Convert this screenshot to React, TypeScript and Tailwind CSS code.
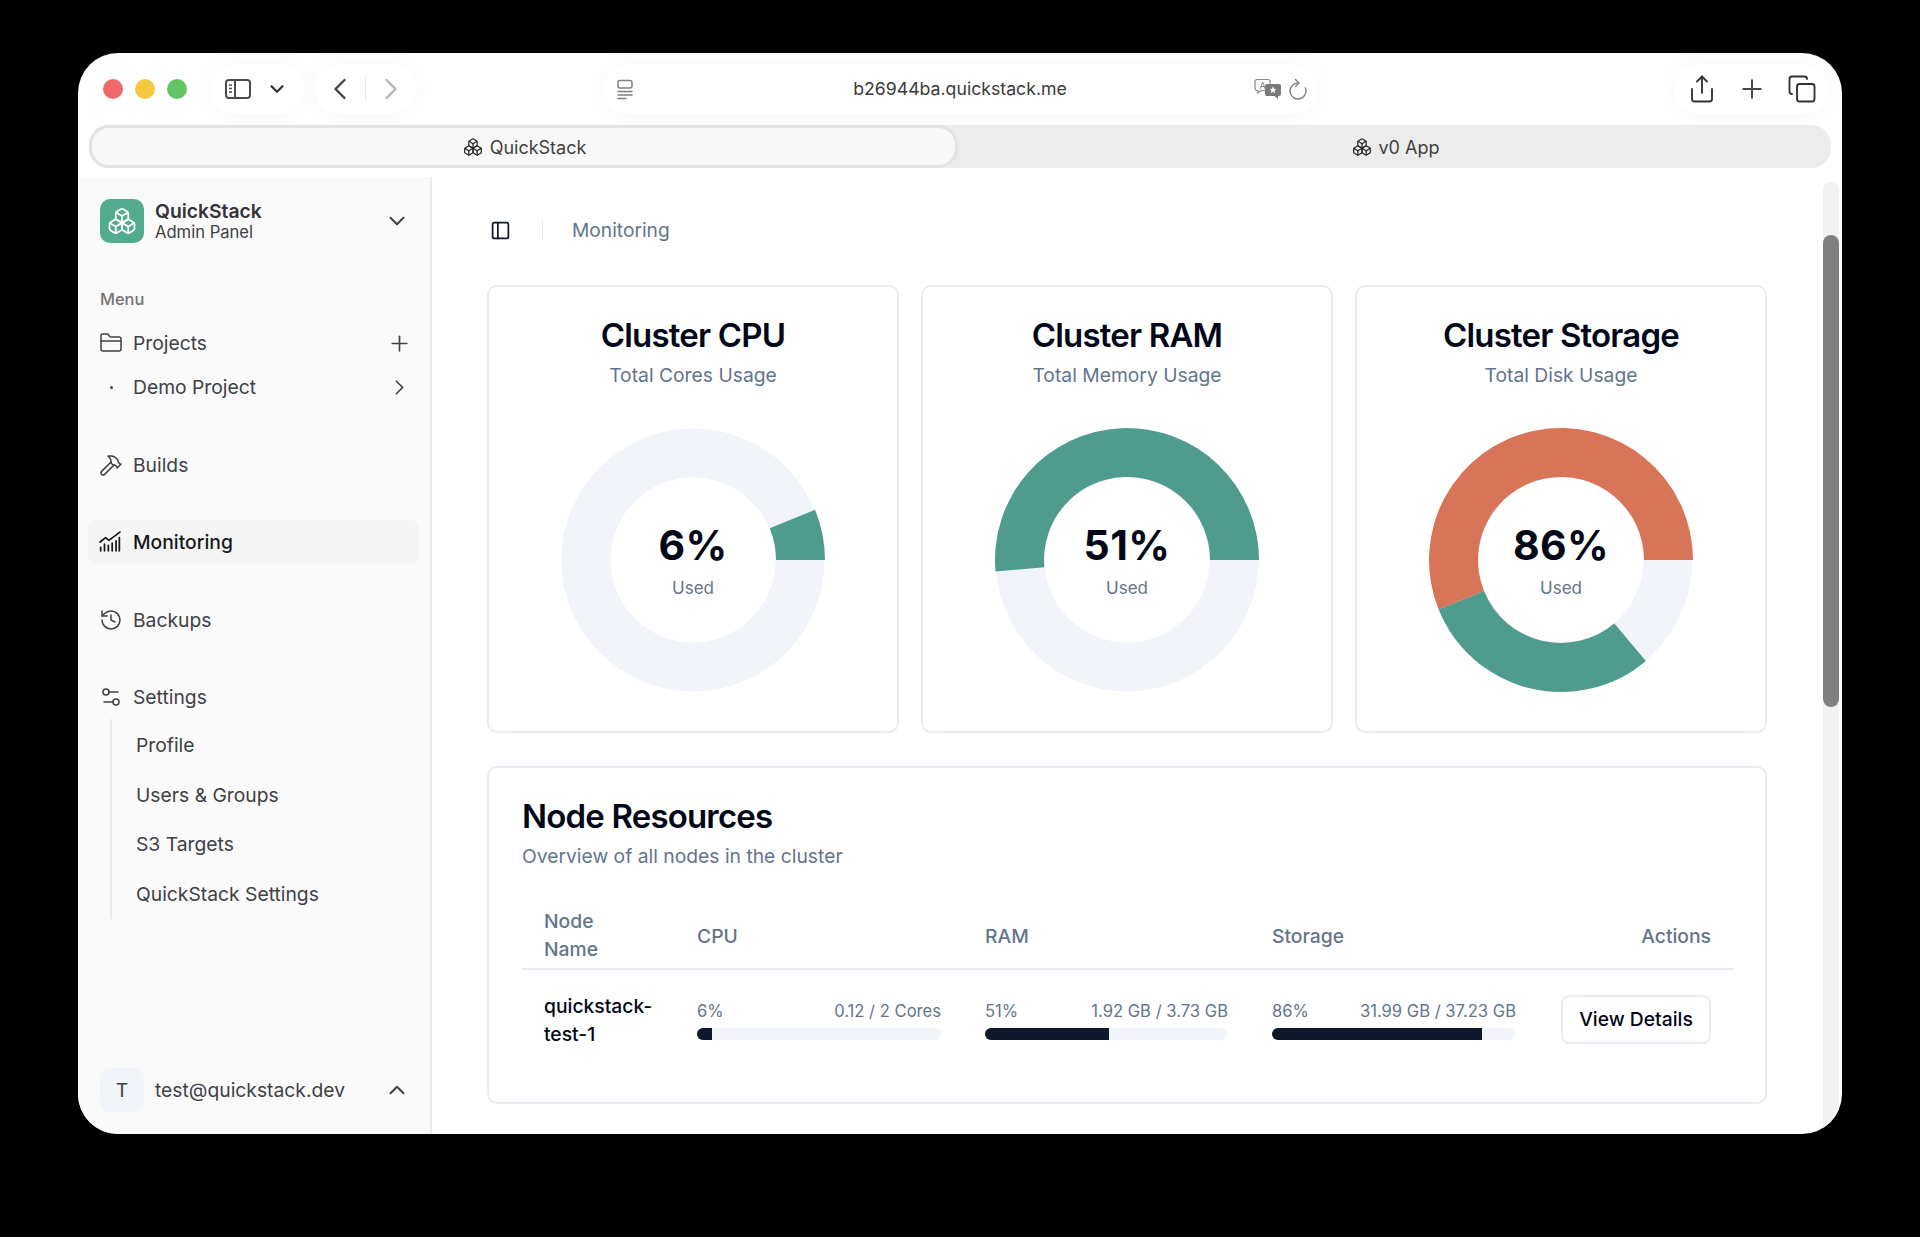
import { Boxes, ChevronDown, ChevronLeft, ChevronRight, ChevronUp, Copy, FolderClosed, Hammer, History, PanelLeft, Plus, Settings2, Share } from "lucide-react"

const font = "font-['Inter',sans-serif]"
const teal = "#4f9b8e"
const orange = "#d87558"

// donut wedge, angles are counter-clockwise from 3 o'clock
function wedge(cx: number, cy: number, r1: number, r2: number, from: number, to: number) {
  const rad = (a: number) => (a * Math.PI) / 180
  const pt = (r: number, a: number) => `${(cx + r * Math.cos(rad(a))).toFixed(2)} ${(cy - r * Math.sin(rad(a))).toFixed(2)}`
  const large = to - from > 180 ? 1 : 0
  return `M${pt(r2, from)}A${r2} ${r2} 0 ${large} 0 ${pt(r2, to)}L${pt(r1, to)}A${r1} ${r1} 0 ${large} 1 ${pt(r1, from)}Z`
}

const clusters = [
  { title: "Cluster CPU", sub: "Total Cores Usage", pct: "6%", segs: [{ from: 0, to: 22.4, color: teal }] },
  { title: "Cluster RAM", sub: "Total Memory Usage", pct: "51%", segs: [{ from: 0, to: 185, color: teal }] },
  {
    title: "Cluster Storage",
    sub: "Total Disk Usage",
    pct: "86%",
    segs: [
      { from: 0, to: 202, color: orange },
      { from: 202, to: 310, color: teal },
    ],
  },
]

const usage = [
  { pct: 6, label: "6%", detail: "0.12 / 2 Cores" },
  { pct: 51, label: "51%", detail: "1.92 GB / 3.73 GB" },
  { pct: 86, label: "86%", detail: "31.99 GB / 37.23 GB" },
]

function Donut({ pct, segs }: { pct: string; segs: { from: number; to: number; color: string }[] }) {
  return (
    <div className="relative mt-[41px] h-[264px] w-[264px]">
      <svg viewBox="0 0 264 264" className="h-full w-full">
        <circle cx="132" cy="132" r="107" fill="none" stroke="#f1f5f9" strokeWidth="49" />
        {segs.map((s) => (
          <path key={s.from} d={wedge(132, 132, 83, 132, s.from, s.to)} fill={s.color} />
        ))}
      </svg>
      <div className="absolute inset-0 flex flex-col items-center justify-center">
        <div className="mt-[-1px] text-[41px] leading-[50px] font-bold tracking-[0.01em] text-[#020817]">{pct}</div>
        <div className="mt-[6px] text-[17px] leading-[24px] text-[#64748b]">Used</div>
      </div>
    </div>
  )
}

function NavItem({ icon, label, active, right }: { icon: React.ReactNode; label: string; active?: boolean; right?: React.ReactNode }) {
  return (
    <div className={`flex h-[44px] items-center rounded-lg pr-[7px] pl-[11px] text-[19.3px] ${active ? "bg-[#f5f5f5] font-medium text-[#18181b]" : "text-[#3f3f46]"}`}>
      <span className="flex w-[34px] shrink-0 items-center">{icon}</span>
      <span className="flex-1">{label}</span>
      {right}
    </div>
  )
}

function TrendIcon() {
  return (
    <svg width="22" height="22" viewBox="0 0 20 20" fill="none" stroke="#18181b" strokeWidth="1.6" strokeLinecap="round" strokeLinejoin="round">
      <path d="M1 10l5-4 3 2.500L19 1" />
      <path d="M1.500 18v-3M5 18v-6M8.500 18v-5M12 18v-7M15.500 18v-9M18.500 18V6" />
    </svg>
  )
}

function TranslateIcon() {
  return (
    <svg width="28" height="22" viewBox="0 0 28 22" fill="none">
      <path d="M3 1.500h11a2 2 0 0 1 2 2v7a2 2 0 0 1-2 2H7l-3 2.500v-2.500H3a2 2 0 0 1-2-2v-7a2 2 0 0 1 2-2z" fill="#fff" stroke="#8a8a8a" strokeWidth="1.200" />
      <text x="8.500" y="10.500" textAnchor="middle" fontSize="9" fill="#777" fontFamily="Inter, sans-serif">A</text>
      <path d="M13 6h12a2 2 0 0 1 2 2v8a2 2 0 0 1-2 2h-1v3l-3.500-3H13a2 2 0 0 1-2-2V8a2 2 0 0 1 2-2z" fill="#7a7a7a" />
      <path d="M19 8.500l1 2.300 2.400.2-1.800 1.600.6 2.400-2.200-1.300-2.200 1.300.6-2.400-1.800-1.600 2.400-.2z" fill="#fff" />
    </svg>
  )
}

function ReloadIcon() {
  return (
    <svg width="20" height="22" viewBox="0 0 20 22" fill="none" stroke="#808080" strokeWidth="1.400" strokeLinecap="round" strokeLinejoin="round">
      <path d="M17.400 10a8 8 0 1 1-7.400-5" />
      <path d="M7.500 1.500L11 5 7.500 8.500" />
    </svg>
  )
}

function SidebarGlyph() {
  return (
    <svg width="28" height="24" viewBox="0 0 28 24" fill="none" stroke="#4b4b4b" strokeWidth="2">
      <rect x="2" y="3" width="24" height="18" rx="3" />
      <path d="M11 3v18" />
      <path d="M5 8h3M5 11.500h3M5 15h3" strokeWidth="1.300" />
    </svg>
  )
}

function TabsGlyph() {
  return (
    <svg width="22" height="22" viewBox="0 0 22 22" fill="none" stroke="#808080" strokeWidth="1.500" strokeLinecap="round">
      <rect x="4" y="2.500" width="14" height="7.500" rx="2" />
      <path d="M4 13.500h14M4 17h14M4 20.500h8" />
    </svg>
  )
}

export default function App() {
  return (
    <div className={`min-h-screen bg-black pt-[53px] pl-[78px] ${font}`}>
      <div className="flex h-[1081px] w-[1764px] flex-col overflow-hidden rounded-[40px] bg-white">
        {/* Safari toolbar */}
        <div className="flex h-[72px] shrink-0 items-center pr-[14px] pl-[25px]">
          <div className="flex gap-[12px]">
            <span className="h-[20px] w-[20px] rounded-full bg-[#ee6a6a]" />
            <span className="h-[20px] w-[20px] rounded-full bg-[#f5c93f]" />
            <span className="h-[20px] w-[20px] rounded-full bg-[#61c465]" />
          </div>
          <div className="ml-[24px] flex h-[50px] w-[94px] items-center gap-[14px] rounded-full bg-white pl-[13px] shadow-[0_0_24px_rgba(0,0,0,0.04)]">
            <SidebarGlyph />
            <ChevronDown size={22} strokeWidth={2.500} className="text-[#333]" />
          </div>
          <div className="ml-[10px] flex h-[50px] w-[101px] items-center rounded-full bg-white shadow-[0_0_24px_rgba(0,0,0,0.04)]">
            <span className="flex flex-1 justify-center"><ChevronLeft size={36} strokeWidth={1.600} className="text-[#444]" /></span>
            <span className="h-[24px] w-px bg-[#ececec]" />
            <span className="flex flex-1 justify-center"><ChevronRight size={36} strokeWidth={1.600} className="text-[#b5b5b5]" /></span>
          </div>
          <div className="ml-[188px] flex h-[50px] w-[713px] items-center rounded-full bg-white pr-[9px] pl-[10px] shadow-[0_0_24px_rgba(0,0,0,0.04)]">
            <TabsGlyph />
            <span className="flex-1 pl-[30px] text-center text-[17.700px] text-[#3a3a3a]">b26944ba.quickstack.me</span>
            <TranslateIcon />
            <span className="ml-[6px]"><ReloadIcon /></span>
          </div>
          <div className="ml-auto flex h-[50px] w-[154px] items-center justify-between rounded-full bg-white pr-[11px] pl-[13px] shadow-[0_0_24px_rgba(0,0,0,0.04)]">
            <Share size={30} strokeWidth={1.500} className="text-[#333]" />
            <Plus size={30} strokeWidth={1.500} className="text-[#444]" />
            <Copy size={30} strokeWidth={1.500} className="text-[#333]" />
          </div>
        </div>

        {/* Tabs */}
        <div className="mx-[11px] flex h-[43px] shrink-0 rounded-[20px] bg-[#ececec] text-[18px] text-[#3f3f3f]">
          <div className="flex w-[869px] items-center justify-center gap-[7px] rounded-[20px] border-[3px] border-[#e2e2e2] bg-[#f8f8f8] pt-[1px] pl-[2px]">
            <Boxes size={20} strokeWidth={1.500} className="text-[#27272a]" />
            QuickStack
          </div>
          <div className="flex flex-1 items-center justify-center gap-[7px] pt-[1px] pl-[2px]">
            <Boxes size={20} strokeWidth={1.500} className="text-[#27272a]" />
            v0 App
          </div>
        </div>

        <div className="mt-[9px] flex min-h-0 flex-1">
          {/* Sidebar */}
          <aside className="flex w-[354px] shrink-0 flex-col border-r-2 border-[#e8edf3] bg-[#fafafa] pr-[11px] pl-[10px]">
            <div className="mt-[22px] flex h-[44px] items-center pr-[2px] pl-[12px]">
              <div className="flex h-[44px] w-[44px] items-center justify-center rounded-[10px] bg-[#52ab8f]">
                <Boxes size={30} strokeWidth={1.400} className="text-white" />
              </div>
              <div className="ml-[11px] flex-1">
                <div className="text-[19.300px] leading-[22px] font-semibold text-[#333338]">QuickStack</div>
                <div className="text-[16.600px] leading-[20px] text-[#3f3f46]">Admin Panel</div>
              </div>
              <ChevronDown size={26} strokeWidth={1.800} className="mr-[7px] text-[#3f3f46]" />
            </div>

            <div className="mt-[44px] pl-[12px] text-[16.400px] leading-[24px] font-medium text-[#737373]">Menu</div>
            <div className="mt-[10px]">
              <NavItem icon={<FolderClosed size={24} strokeWidth={1.500} />} label="Projects" right={<Plus size={25} strokeWidth={1.600} />} />
              <NavItem icon={<span className="ml-[11px] h-[3px] w-[3px] rounded-full bg-[#3f3f46]" />} label="Demo Project" right={<ChevronRight size={25} strokeWidth={1.600} />} />
            </div>
            <div className="mt-[34px]">
              <NavItem icon={<Hammer size={24} strokeWidth={1.500} />} label="Builds" />
            </div>
            <div className="mt-[33px]">
              <NavItem active icon={<TrendIcon />} label="Monitoring" />
            </div>
            <div className="mt-[34px]">
              <NavItem icon={<History size={24} strokeWidth={1.500} />} label="Backups" />
            </div>
            <div className="mt-[33px]">
              <NavItem icon={<Settings2 size={24} strokeWidth={1.500} />} label="Settings" />
              <div className="ml-[22px] border-l-2 border-[#e8edf3] pt-[2px] pl-[24px] text-[19.300px] text-[#3f3f46]">
                {["Profile", "Users & Groups", "S3 Targets", "QuickStack Settings"].map((t) => (
                  <div key={t} className="flex h-[49.500px] items-center">{t}</div>
                ))}
              </div>
            </div>

            <div className="mt-auto mb-[22px] flex h-[44px] items-center pl-[12px]">
              <div className="flex h-[44px] w-[44px] items-center justify-center rounded-[10px] bg-[#f1f5f9] text-[19.300px] text-[#3f3f46]">T</div>
              <span className="ml-[11px] flex-1 text-[19.300px] text-[#3f3f46]">test@quickstack.dev</span>
              <ChevronUp size={26} strokeWidth={1.800} className="mr-[9px] text-[#3f3f46]" />
            </div>
          </aside>

          {/* Main */}
          <main className="min-w-0 flex-1 overflow-hidden pr-[56px] pl-[55px]">
            <div className="mt-[40px] flex h-[26px] items-center">
              <PanelLeft size={21} strokeWidth={2} className="ml-[3px] text-[#0f172a]" />
              <span className="mr-[29px] ml-[31px] h-[20px] w-px bg-[#e2e8f0]" />
              <span className="text-[19.200px] text-[#64748b]">Monitoring</span>
            </div>

            <div className="mt-[42px] grid grid-cols-3 gap-[22px]">
              {clusters.map((c) => (
                <div key={c.title} className="flex h-[448px] flex-col items-center rounded-[10px] border-2 border-[#e8edf3] bg-white pt-[28px]">
                  <h2 className="text-[33px] leading-[40px] font-semibold tracking-[-0.025em] text-[#020817]">{c.title}</h2>
                  <p className="mt-[8px] text-[19.300px] leading-[24px] text-[#64748b]">{c.sub}</p>
                  <Donut pct={c.pct} segs={c.segs} />
                </div>
              ))}
            </div>

            <div className="mt-[33px] h-[338px] rounded-[10px] border-2 border-[#e8edf3] bg-white pt-[28px] pr-[32px] pl-[33px]">
              <h2 className="text-[33px] leading-[40px] font-semibold tracking-[-0.025em] text-[#020817]">Node Resources</h2>
              <p className="mt-[8px] text-[19.300px] leading-[24px] text-[#64748b]">Overview of all nodes in the cluster</p>
              <table className="mt-[33px] w-full table-fixed border-collapse text-left text-[19.300px]">
                <colgroup>
                  <col className="w-[153px]" />
                  <col className="w-[288px]" />
                  <col className="w-[287px]" />
                  <col className="w-[288px]" />
                  <col />
                </colgroup>
                <thead>
                  <tr className="border-b-2 border-[#e8edf3] text-[#64748b]">
                    <th className="h-[68px] px-[22px] leading-[28px] font-medium">
                      Node
                      <br />
                      Name
                    </th>
                    <th className="px-[22px] pt-[3px] font-medium">CPU</th>
                    <th className="px-[22px] pt-[3px] font-medium">RAM</th>
                    <th className="px-[22px] pt-[3px] font-medium">Storage</th>
                    <th className="pt-[3px] pr-[22px] text-right font-medium">Actions</th>
                  </tr>
                </thead>
                <tbody>
                  <tr>
                    <td className="h-[100px] px-[22px] pt-[2px] leading-[27.500px] font-medium text-[#020817]">
                      quickstack-
                      <br />
                      test-1
                    </td>
                    {usage.map((u) => (
                      <td key={u.label} className="px-[22px]">
                        <div className="flex justify-between text-[16.600px] leading-[24px] text-[#64748b]">
                          <span>{u.label}</span>
                          <span>{u.detail}</span>
                        </div>
                        <div className="mt-[5px] h-[12px] overflow-hidden rounded-full bg-[#f1f5f9]">
                          <div className="h-full bg-[#0f172a]" style={{ width: `${u.pct}%` }} />
                        </div>
                      </td>
                    ))}
                    <td className="pr-[22px] text-right">
                      <button className="h-[49px] w-[150px] rounded-[8px] border-2 border-[#e8edf3] bg-white text-[19.300px] font-medium text-[#020817]">View Details</button>
                    </td>
                  </tr>
                </tbody>
              </table>
            </div>
          </main>

          {/* Scrollbar */}
          <div className="relative w-[19px] shrink-0 pt-[5px]">
            <div className="h-full w-[16px] rounded-t-full bg-[#f2f2f2]">
              <div className="absolute top-[58px] left-0 h-[472px] w-[16px] rounded-full bg-[#808080]" />
            </div>
          </div>
        </div>
      </div>
    </div>
  )
}
